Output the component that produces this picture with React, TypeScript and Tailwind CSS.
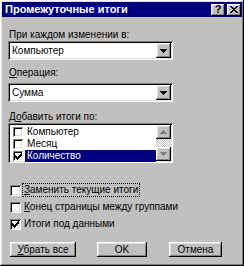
import React from "react";

const raised =
  "shadow-[inset_-1px_-1px_#000,inset_1px_1px_#fff,inset_-2px_-2px_#808080,inset_2px_2px_#dfdfdf]";
const sunken =
  "shadow-[inset_1px_1px_#808080,inset_-1px_-1px_#fff,inset_2px_2px_#000,inset_-2px_-2px_#dfdfdf]";

function Tick() {
  return (
    <svg width="7" height="7" viewBox="0 0 7 7" shapeRendering="crispEdges">
      <path d="M6 0h1v1h-1zM5 1h2v1h-2zM0 2h1v1h-1zM4 2h3v1h-3zM0 3h2v1h-2zM3 3h3v1h-3zM0 4h5v1h-5zM1 5h3v1h-3zM2 6h1v1h-1z" fill="#000" />
    </svg>
  );
}

function DownArrow({ color = "#000" }: { color?: string }) {
  return (
    <svg width="7" height="4" viewBox="0 0 7 4" shapeRendering="crispEdges">
      <path d="M0 0h7v1h-7zM1 1h5v1h-5zM2 2h3v1h-3zM3 3h1v1h-1z" fill={color} />
    </svg>
  );
}

function UpArrow({ color = "#000" }: { color?: string }) {
  return (
    <svg width="7" height="4" viewBox="0 0 7 4" shapeRendering="crispEdges">
      <path d="M3 0h1v1h-1zM2 1h3v1h-3zM1 2h5v1h-5zM0 3h7v1h-7z" fill={color} />
    </svg>
  );
}

function Combo({ value }: { value: string }) {
  return (
    <div className={`w-[165px] h-[19px] bg-white flex items-center p-[2px] ${sunken}`}>
      <span className="flex-1 pl-[2px] leading-none">{value}</span>
      <div className={`w-[15px] h-[15px] bg-[#c0c0c0] flex items-center justify-center ${raised}`}>
        <DownArrow />
      </div>
    </div>
  );
}

function Box({ checked, className }: { checked?: boolean; className: string }) {
  return (
    <div className={`bg-white flex items-center justify-center shrink-0 ${sunken} ${className}`}>
      {checked && <Tick />}
    </div>
  );
}

function ListRow({ label, checked, selected }: { label: string; checked?: boolean; selected?: boolean }) {
  return (
    <div className="h-[12px] flex items-center pl-[3px]">
      <Box checked={checked} className="w-[10px] h-[10px]" />
      <span
        className={`ml-[2px] h-[12px] flex-1 pl-[2px] leading-[12px] ${selected ? "bg-[#000080] text-white" : ""}`}
      >
        {label}
      </span>
    </div>
  );
}

function Option({ children, checked, focused }: { children: React.ReactNode; checked?: boolean; focused?: boolean }) {
  return (
    <div className="h-[14px] flex items-center pl-[2px]">
      <Box checked={checked} className="w-[11px] h-[11px]" />
      <span
        className={`ml-[1px] px-[1px] leading-[12px] border border-dotted ${focused ? "border-black" : "border-transparent"}`}
      >
        {children}
      </span>
    </div>
  );
}

function Button({ children, className }: { children: React.ReactNode; className: string }) {
  return (
    <div className={`h-[15px] bg-[#c0c0c0] flex items-center justify-center leading-none ${raised} ${className}`}>
      {children}
    </div>
  );
}

function TitleBtn({ children, className = "" }: { children: React.ReactNode; className?: string }) {
  return (
    <div
      className={`w-[14px] h-[12px] bg-[#c0c0c0] flex items-center justify-center text-black font-bold text-[11px] leading-none ${raised} ${className}`}
    >
      {children}
    </div>
  );
}

export default function App() {
  return (
    <div
      className={`w-[244px] h-[266px] bg-[#c0c0c0] p-[2px] flex flex-col font-['Liberation_Sans',Arial,sans-serif] text-[10px] text-black ${raised}`}
    >
      <div className="h-[15px] bg-[#000080] flex items-center pl-[3px] pr-[1px]">
        <span className="flex-1 text-white font-bold text-[11px] leading-none">Промежуточные итоги</span>
        <TitleBtn>?</TitleBtn>
        <TitleBtn className="ml-[2px]">
          <svg width="8" height="7" viewBox="0 0 8 7" shapeRendering="crispEdges">
            <path d="M0 0h2v1h-2zM6 0h2v1h-2zM1 1h2v1h-2zM5 1h2v1h-2zM2 2h4v1h-4zM3 3h2v1h-2zM2 4h4v1h-4zM1 5h2v1h-2zM5 5h2v1h-2zM0 6h2v1h-2zM6 6h2v1h-2z" fill="#000" />
          </svg>
        </TitleBtn>
      </div>

      <div className="flex flex-col pl-[6px]">
        <div className="mt-[11px] leading-[13px] pl-[1px]">При каждом изменении в:</div>
        <Combo value="Компьютер" />

        <div className="mt-[6px] leading-[13px] pl-[1px]">
          <span className="underline">О</span>перация:
        </div>
        <div className="mt-[4px]">
          <Combo value="Сумма" />
        </div>

        <div className="mt-[8px] leading-[13px] pl-[1px]">
          Д<span className="underline">о</span>бавить итоги по:
        </div>
        <div className={`w-[165px] h-[40px] bg-white flex p-[2px] ${sunken}`}>
          <div className="flex-1 flex flex-col pt-[1px]">
            <ListRow label="Компьютер" />
            <ListRow label="Месяц" />
            <ListRow label="Количество" checked selected />
          </div>
          <div className="w-[15px] flex flex-col">
            <div className={`h-[14px] bg-[#c0c0c0] flex items-center justify-center ${raised}`}>
              <UpArrow color="#808080" />
            </div>
            <div className="flex-1 bg-[repeating-conic-gradient(#c0c0c0_0_25%,#fff_0_50%)] bg-[length:2px_2px]" />
            <div className={`h-[14px] bg-[#c0c0c0] flex items-center justify-center ${raised}`}>
              <DownArrow color="#808080" />
            </div>
          </div>
        </div>

        <div className="mt-[20px] flex flex-col gap-[3px]">
          <Option focused>
            <span className="underline">З</span>аменить текущие итоги
          </Option>
          <Option>
            <span className="underline">К</span>онец страницы между группами
          </Option>
          <Option checked>
            Итоги под <span className="underline">д</span>анными
          </Option>
        </div>

        <div className="mt-[11px] flex pl-[2px]">
          <Button className="w-[66px]">
            <span>
              <span className="underline">У</span>брать все
            </span>
          </Button>
          <Button className="w-[50px] ml-[21px]">OK</Button>
          <Button className="w-[53px] ml-[22px]">Отмена</Button>
        </div>
      </div>
    </div>
  );
}
